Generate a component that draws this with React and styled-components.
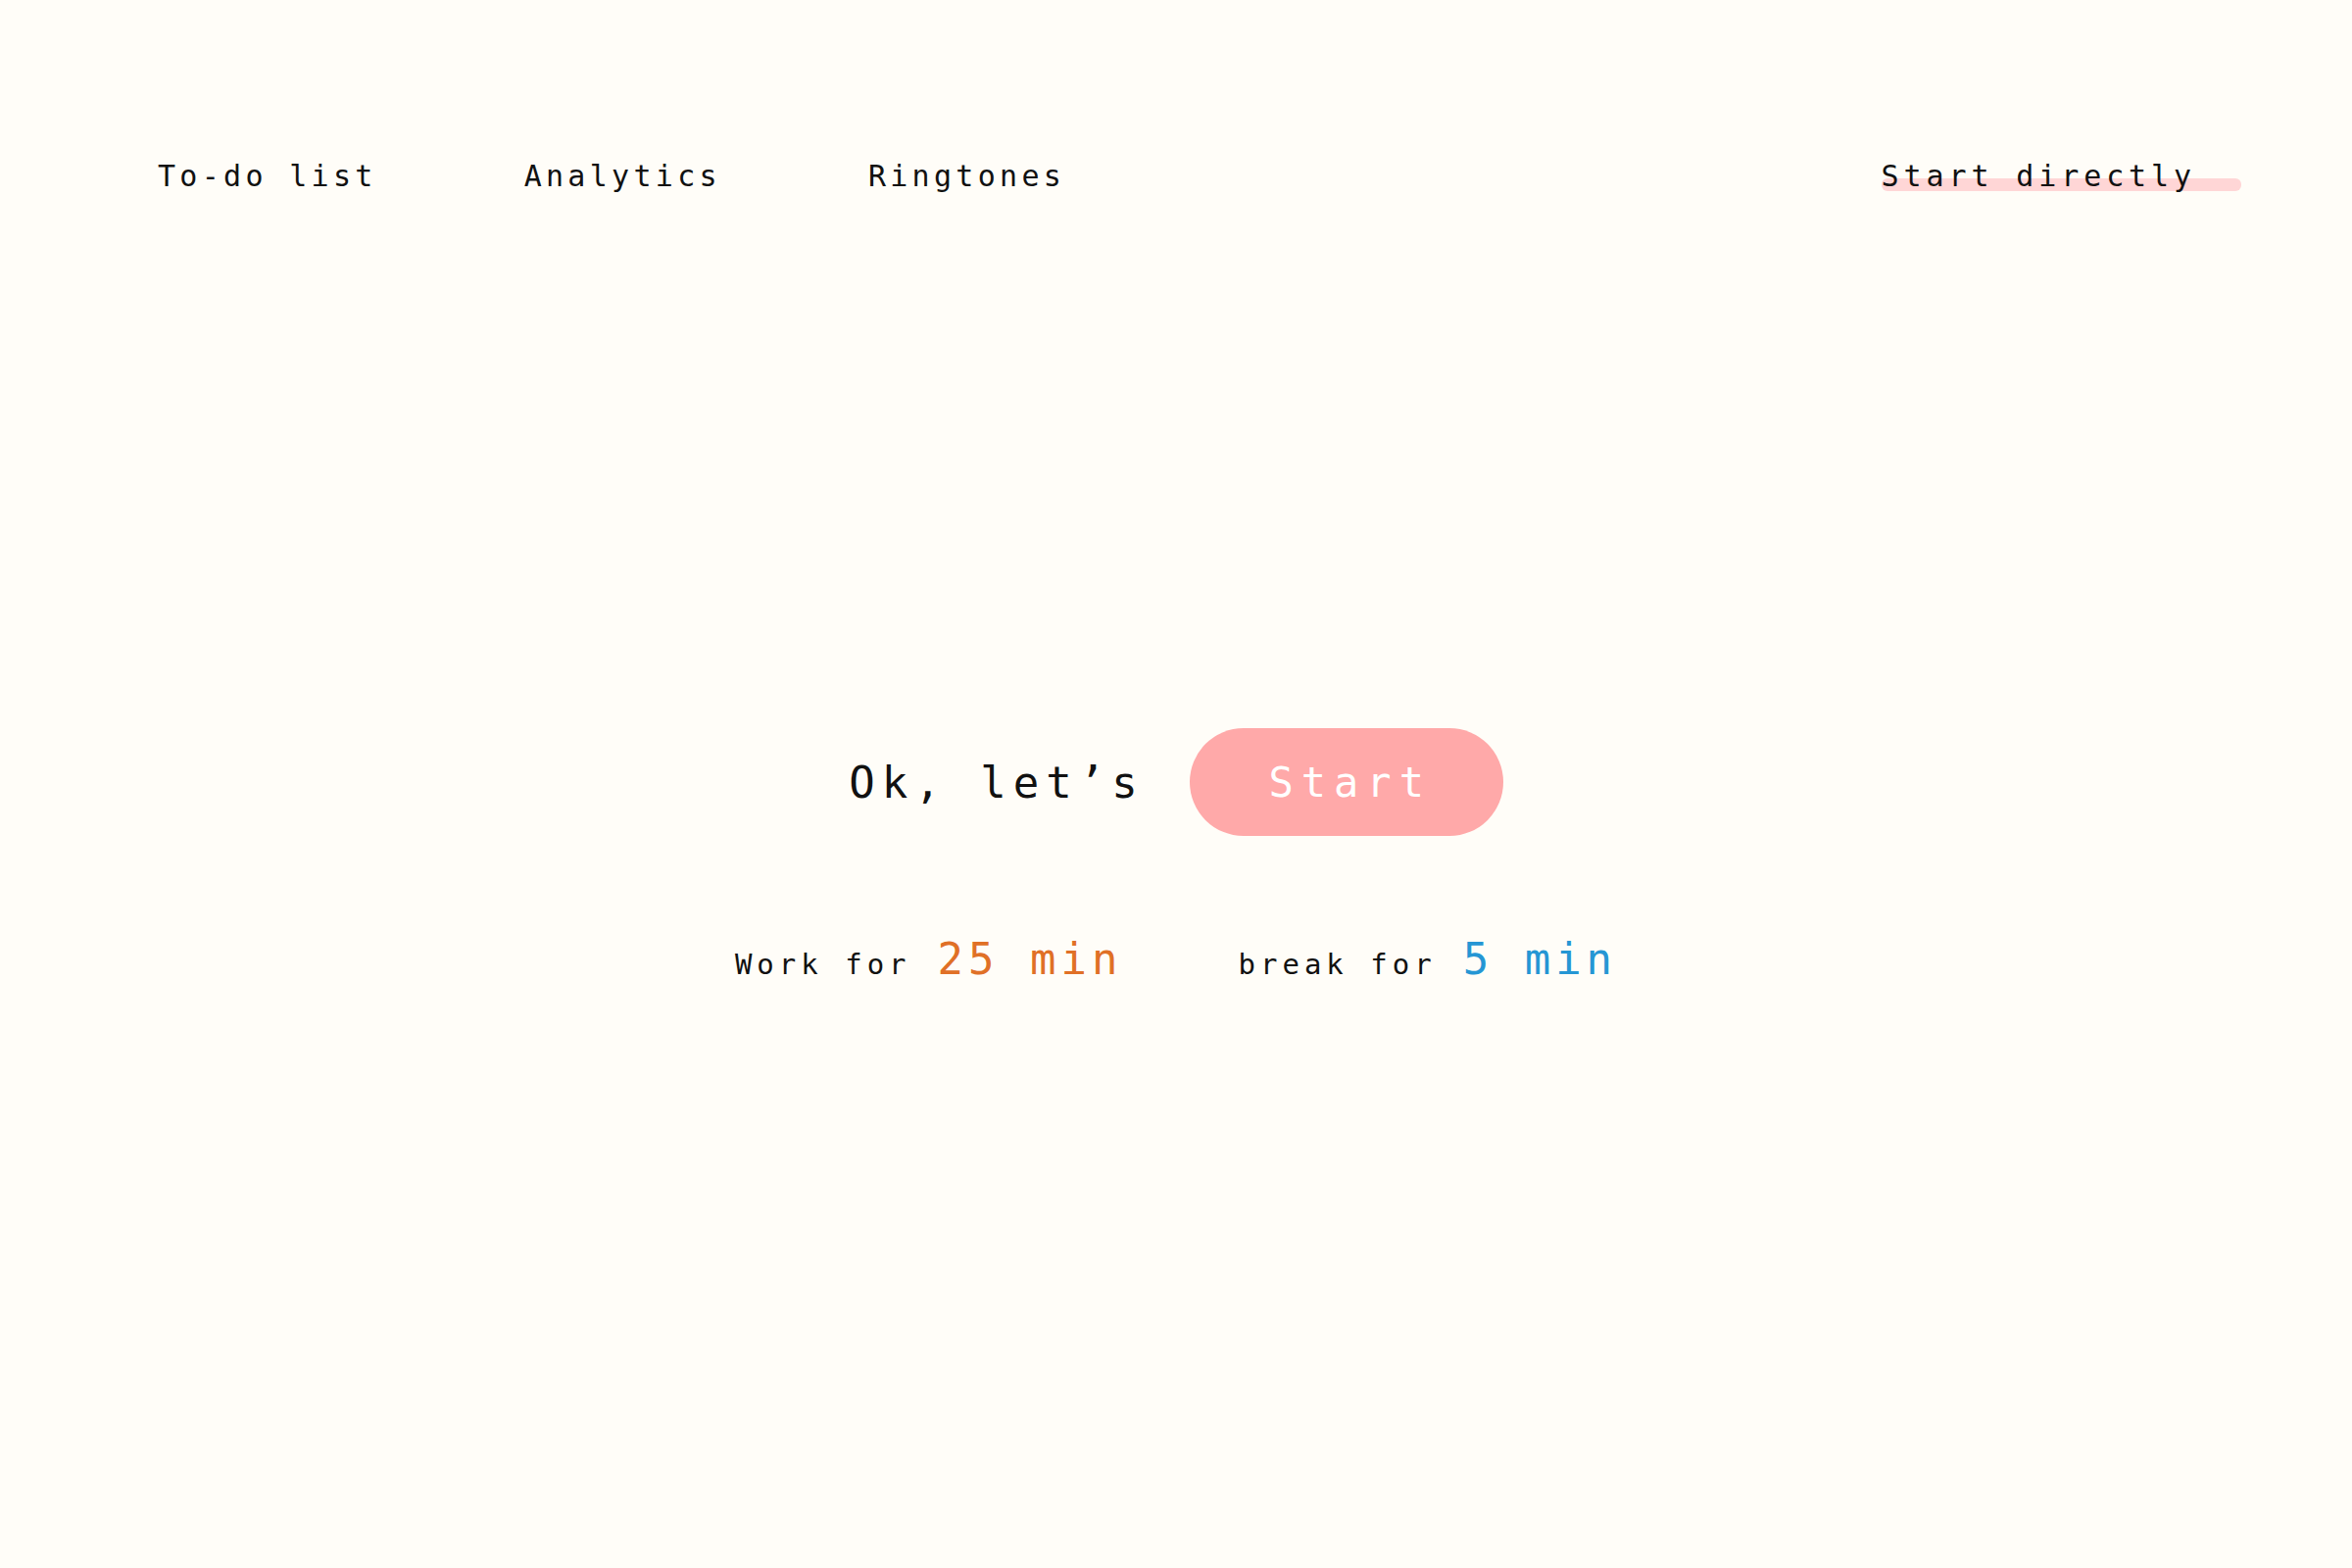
import styled, { createGlobalStyle } from "styled-components";

const GlobalStyle = createGlobalStyle`
    html, body {
        margin: 0;
        padding: 0;
        background-color: #fffdf8;
    }

    body {
        font-family: "DejaVu Sans Mono", "Liberation Mono", monospace;
        color: #111;
    }
`;

const Page = styled.div`
    width: 100%;
    min-height: 100vh;
    background-color: #fffdf8;

    display: flex;
    flex-direction: column;
`;

const Header = styled.header`
    display: flex;
    align-items: center;
    justify-content: space-between;
    padding: 150px 113px 0 161px;
`;

const NavList = styled.nav`
    display: flex;
    align-items: center;
    gap: 150px;
`;

const NavLink = styled.a`
    position: relative;
    font-size: 30px;
    line-height: 60px;
    letter-spacing: 4.3px;
    color: #111;
    text-decoration: none;
    cursor: pointer;
`;

const HighlightLink = styled(NavLink)`
    letter-spacing: 4.9px;
    padding-right: 46px;
    z-index: 0;

    &::after {
        content: "";
        position: absolute;
        left: 0;
        right: 0;
        top: 32px;
        height: 13px;
        border-radius: 6px;
        background-color: #ffd6d6;
        z-index: -1;
    }
`;

const Main = styled.main`
    display: flex;
    flex-direction: column;
    align-items: center;
    padding-top: 533px;
    gap: 100px;
`;

const StartRow = styled.div`
    display: flex;
    align-items: center;
    gap: 46px;
`;

const Lead = styled.span`
    font-size: 44px;
    letter-spacing: 7px;
    color: #111;
`;

const StartButton = styled.button`
    width: 320px;
    height: 110px;
    border: none;
    border-radius: 55px;
    background-color: #ffa9a9;
    color: #fff;
    font-family: "DejaVu Sans Mono", "Liberation Mono", monospace;
    font-size: 42px;
    letter-spacing: 8px;
    padding: 0 0 0 8px;
    cursor: pointer;
`;

const DurationRow = styled.div`
    display: flex;
    align-items: baseline;
    gap: 118px;
`;

const Duration = styled.div`
    display: flex;
    align-items: baseline;
    gap: 27px;
`;

const Label = styled.span`
    font-size: 29px;
    letter-spacing: 5px;
    color: #111;
`;

const Value = styled.span`
    font-size: 44px;
    letter-spacing: 5px;
    color: ${(props) => (props.$kind === "work" ? "#e07026" : "#2596d4")};
`;

const App = () => {
    return (
        <>
            <GlobalStyle />
            <Page>
                <Header>
                    <NavList>
                        <NavLink>To-do list</NavLink>
                        <NavLink>Analytics</NavLink>
                        <NavLink>Ringtones</NavLink>
                    </NavList>
                    <HighlightLink>Start directly</HighlightLink>
                </Header>
                <Main>
                    <StartRow>
                        <Lead>Ok, let’s</Lead>
                        <StartButton>Start</StartButton>
                    </StartRow>
                    <DurationRow>
                        <Duration>
                            <Label>Work for</Label>
                            <Value $kind="work">25 min</Value>
                        </Duration>
                        <Duration>
                            <Label>break for</Label>
                            <Value $kind="break">5 min</Value>
                        </Duration>
                    </DurationRow>
                </Main>
            </Page>
        </>
    );
};

export default App;
